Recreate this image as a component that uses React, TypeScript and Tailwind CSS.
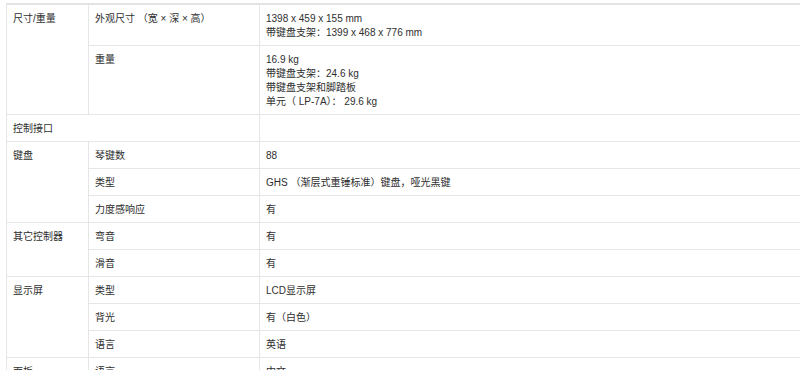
import React from 'react';

type Row = {
  group?: { label: string; span: number };
  name?: string;
  value: string[];
  wide?: boolean;
};

const rows: Row[] = [
  {
    group: { label: '尺寸/重量', span: 2 },
    name: '外观尺寸 （宽 × 深 × 高）',
    value: ['1398 x 459 x 155 mm', '带键盘支架：1399 x 468 x 776 mm'],
  },
  {
    name: '重量',
    value: ['16.9 kg', '带键盘支架：24.6 kg', '带键盘支架和脚踏板', '单元（ LP-7A）： 29.6 kg'],
  },
  { group: { label: '控制接口', span: 1 }, wide: true, value: [] },
  { group: { label: '键盘', span: 3 }, name: '琴键数', value: ['88'] },
  { name: '类型', value: ['GHS （渐层式重锤标准）键盘，哑光黑键'] },
  { name: '力度感响应', value: ['有'] },
  { group: { label: '其它控制器', span: 2 }, name: '弯音', value: ['有'] },
  { name: '滑音', value: ['有'] },
  { group: { label: '显示屏', span: 3 }, name: '类型', value: ['LCD显示屏'] },
  { name: '背光', value: ['有（白色）'] },
  { name: '语言', value: ['英语'] },
  { group: { label: '面板', span: 1 }, name: '语言', value: ['中文'] },
];

const cell = 'border border-[#e6e6e6] align-top px-[6px] pt-[7px] pb-[5px] leading-[14px]';

export default function App() {
  return (
    <div
      className="w-[800px] h-[370px] overflow-hidden bg-white pt-[3px] pl-[6px] text-[10px] text-[#2e2e2e]"
      style={{ fontFamily: '"Liberation Sans", "Noto Sans CJK SC", sans-serif' }}
    >
      <table className="w-[820px] border-collapse table-fixed">
        <colgroup>
          <col className="w-[82px]" />
          <col className="w-[171px]" />
          <col />
        </colgroup>
        <tbody>
          {rows.map((r, i) => {
            const top = i === 0 ? ' border-t-2 border-t-[#e3e3e3]' : '';
            return (
              <tr key={i}>
                {r.group && (
                  <td
                    rowSpan={r.group.span}
                    colSpan={r.wide ? 2 : 1}
                    className={`${cell} bg-[#f7f7f7]${top}`}
                  >
                    {r.group.label}
                  </td>
                )}
                {!r.wide && <td className={`${cell} bg-[#f7f7f7]${top}`}>{r.name}</td>}
                <td className={`${cell} bg-white pl-[7px]${top}`}>
                  {r.value.map((v, j) => (
                    <div key={j}>{v}</div>
                  ))}
                </td>
              </tr>
            );
          })}
        </tbody>
      </table>
    </div>
  );
}
